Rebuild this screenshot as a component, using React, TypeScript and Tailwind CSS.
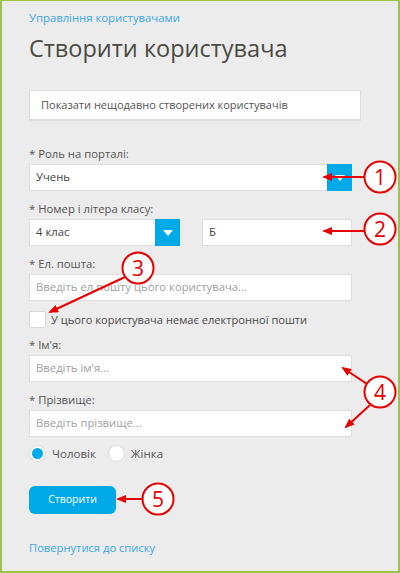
import type { ReactNode } from "react";

function Label({ children, className = "" }: { children: ReactNode; className?: string }) {
  return <p className={`text-[11.3px] leading-[16px] text-[#555] ${className}`}>{children}</p>;
}

function Field({ placeholder, value, className = "" }: { placeholder?: string; value?: string; className?: string }) {
  return (
    <div
      className={`flex h-[27px] items-center border border-[#dedede] bg-white px-[6px] text-[11.3px] ${className}`}
    >
      {value ? <span className="text-[#444]">{value}</span> : <span className="text-[#a0a0a0]">{placeholder}</span>}
    </div>
  );
}

function Select({ value, className = "" }: { value: string; className?: string }) {
  return (
    <div className={`flex h-[27px] border border-[#dedede] bg-white text-[11.3px] ${className}`}>
      <span className="flex flex-1 items-center px-[6px] text-[#444]">{value}</span>
      <span className="-my-px -mr-px flex w-[25px] items-center justify-center bg-[#00aae8]">
        <svg width="10" height="6" viewBox="0 0 10 6">
          <path d="M0 0h10L5 6z" fill="#fff" />
        </svg>
      </span>
    </div>
  );
}

function Marker({ cx, cy, n }: { cx: number; cy: number; n: number }) {
  return (
    <g>
      <circle cx={cx} cy={cy} r="15.5" fill="#fff" stroke="#e60000" strokeWidth="2" />
      <text
        x={cx}
        y={cy + 7.5}
        textAnchor="middle"
        fontSize="21"
        fontFamily="'Open Sans', sans-serif"
        fill="#e60000"
      >
        {n}
      </text>
    </g>
  );
}

function Arrow({ x1, y1, x2, y2 }: { x1: number; y1: number; x2: number; y2: number }) {
  return <line x1={x1} y1={y1} x2={x2} y2={y2} stroke="#e60000" strokeWidth="2" markerEnd="url(#head)" />;
}

export default function App() {
  return (
    <div className="relative h-[573px] w-[400px] overflow-hidden border-t border-b-2 border-l-2 border-r-2 border-[#9cc44c] bg-[#ececec] font-['Open_Sans',sans-serif]">
      <div className="pl-[27px]">
        <p className="mt-[9px] text-[11.3px] leading-[16px] text-[#3aa8e8]">Управління користувачами</p>
        <h1 className="mt-[6px] text-[23.5px] leading-[32px] text-[#4a4a42]">Створити користувача</h1>

        <div className="mt-[26px] flex h-[30px] w-[332px] items-center border border-[#dcdcdc] bg-white px-[11px] text-[11px] text-[#555] shadow-[0_1px_1px_rgba(0,0,0,0.05)]">
          Показати нещодавно створених користувачів
        </div>

        <div className="w-[323px]">
          <Label className="mt-[26px]">* Роль на порталі:</Label>
          <Select value="Учень" className="mt-[2px]" />

          <Label className="mt-[10px]">* Номер і літера класу:</Label>
          <div className="mt-[2px] flex justify-between">
            <Select value="4 клас" className="w-[151px]" />
            <Field value="Б" className="w-[150px]" />
          </div>

          <Label className="mt-[10px]">* Ел. пошта:</Label>
          <Field placeholder="Введіть ел.пошту цього користувача..." className="mt-[2px]" />

          <label className="mt-[10px] flex items-center gap-[5px]">
            <span className="h-[17px] w-[17px] rounded-[2px] border border-[#d8d8d8] bg-white" />
            <span className="text-[11.1px] leading-[17px] text-[#4a4a4a]">У цього користувача немає електронної пошти</span>
          </label>

          <Label className="mt-[9px]">* Ім'я:</Label>
          <Field placeholder="Введіть ім'я..." className="mt-[2px]" />

          <Label className="mt-[10px]">* Прізвище:</Label>
          <Field placeholder="Введіть прізвище..." className="mt-[2px]" />

          <div className="mt-[8px] flex h-[17px] items-center text-[11.5px] text-[#555]">
            <span className="flex h-[17px] w-[17px] items-center justify-center rounded-full border border-[#d8d8d8] bg-white">
              <span className="h-[11px] w-[11px] rounded-full bg-[#00aae8]" />
            </span>
            <span className="ml-[6px]">Чоловік</span>
            <span className="ml-[12px] h-[17px] w-[17px] rounded-full border border-[#d8d8d8] bg-white" />
            <span className="ml-[6px]">Жінка</span>
          </div>

          <button
            type="button"
            className="mt-[24px] block h-[28px] w-[87px] rounded-[6px] bg-[#00aae8] text-[10.5px] text-white"
          >
            Створити
          </button>

          <p className="mt-[26px] text-[11.2px] leading-[16px] text-[#3aa8e8]">Повернутися до списку</p>
        </div>
      </div>

      <svg className="pointer-events-none absolute -left-[2px] -top-px" width="400" height="573">
        <defs>
          <marker id="head" markerWidth="10" markerHeight="8" refX="8" refY="4" orient="auto" markerUnits="userSpaceOnUse">
            <path d="M0 0L10 4L0 8z" fill="#e60000" />
          </marker>
        </defs>
        <Arrow x1={365} y1={177} x2={324} y2={177} />
        <Marker cx={380} cy={177} n={1} />
        <Arrow x1={365} y1={231} x2={324} y2={231} />
        <Marker cx={380} cy={229} n={2} />
        <Arrow x1={125} y1={277} x2={50} y2={312} />
        <Marker cx={138} cy={268} n={3} />
        <Arrow x1={367} y1={384} x2={343} y2={368} />
        <Arrow x1={370} y1={405} x2={346} y2={427} />
        <Marker cx={380} cy={392} n={4} />
        <Arrow x1={143} y1={499} x2={118} y2={499} />
        <Marker cx={158} cy={499} n={5} />
      </svg>
    </div>
  );
}
